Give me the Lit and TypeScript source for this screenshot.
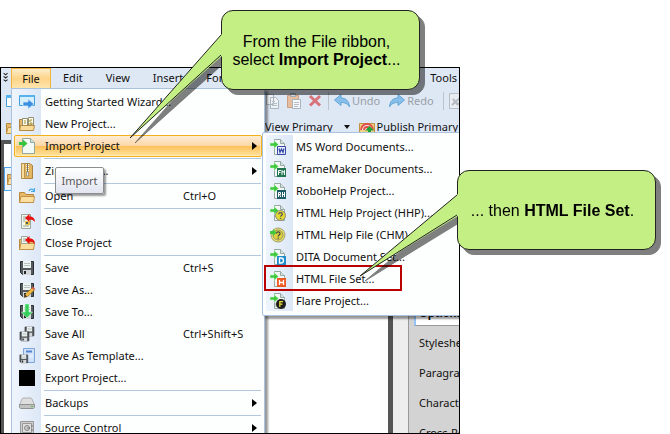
import { LitElement, html, svg, css, nothing, TemplateResult } from "lit";
import { customElement, property } from "lit/decorators.js";
import { classMap } from "lit/directives/class-map.js";

type Item = { label: string; icon: string; keys?: string; sub?: boolean; sep?: boolean; hot?: boolean };

const FILE_MENU: Item[] = [
  { label: "Getting Started Wizard...", icon: "wizard" },
  { label: "New Project...", icon: "newproject" },
  { label: "Import Project", icon: "import", sub: true, hot: true },
  { label: "Zip Project...", icon: "zip", sub: true, sep: true },
  { label: "Open", icon: "open", keys: "Ctrl+O", sep: true },
  { label: "Close", icon: "close", sep: true },
  { label: "Close Project", icon: "closeproject" },
  { label: "Save", icon: "save", keys: "Ctrl+S", sep: true },
  { label: "Save As...", icon: "saveas" },
  { label: "Save To...", icon: "saveto" },
  { label: "Save All", icon: "saveall", keys: "Ctrl+Shift+S" },
  { label: "Save As Template...", icon: "template" },
  { label: "Export Project...", icon: "export" },
  { label: "Backups", icon: "backup", sub: true, sep: true },
  { label: "Source Control", icon: "source", sub: true, sep: true },
];

const IMPORT_MENU: Item[] = [
  { label: "MS Word Documents...", icon: "word" },
  { label: "FrameMaker Documents...", icon: "frame" },
  { label: "RoboHelp Project...", icon: "robo" },
  { label: "HTML Help Project (HHP)...", icon: "hhp" },
  { label: "HTML Help File (CHM)...", icon: "chm" },
  { label: "DITA Document Set...", icon: "dita" },
  { label: "HTML File Set...", icon: "htmlset" },
  { label: "Flare Project...", icon: "flare" },
];

const folder = svg`
  <path d="M.5 14.5V4.5h5l1.500 2h7.500v8z" fill="#e5b967" stroke="#b8863b"/>
  <path d="M.5 14.500 2 8.500h13.500L14.500 14.500z" fill="#fbdf9f" stroke="#c2924a"/>`;
const redArrow = svg`<path d="M6 5 10.500 1v2.500C14 3.500 16 5.500 16 9c-1.500-2-3-2.500-5.500-2.300V9z" fill="#e8110f"/>`;
const disk = svg`
  <path d="M1.500 1.500h13v13h-11l-2-2z" fill="#555a5e" stroke="#2d3033"/>
  <path d="M4 1h8v7H4z" fill="#eef4f2"/><path d="M5 3.500h6M5 5.500h6" stroke="#b7c3c0"/>
  <path d="M4 10h8v5H4z" fill="#d3d7d9"/><path d="M5 11h2v3H5z" fill="#26292b"/>`;
const page = svg`
  <path d="M4.500.5h6l4 4v11h-10z" fill="#f3f8f7" stroke="#96a8a4"/>
  <path d="M10.500.5v4h4" fill="#d6e2df" stroke="#96a8a4"/>
  <path d="M0 4h4V1.500L8.500 5.500 4 9.500V7H0z" fill="#3fc93f" stroke="#d9f6d9" stroke-width=".5"/>`;
const badge = (color: string, glyph: TemplateResult<2>) => svg`
  ${page}<path d="M7 7h9v9H7z" fill=${color}/>
  <g fill="none" stroke="#fff">${glyph}</g>`;
const help = svg`
  <circle cx="10.500" cy="10.500" r="5" fill="#e3d932" stroke="#8a8a7a"/>
  <path d="M8.700 9.300c0-2.200 3.600-2.200 3.600 0 0 1.200-1.800 1.200-1.800 2.500M10.500 13v1" fill="none" stroke="#555" stroke-width="1.300"/>`;

const ICONS: Record<string, TemplateResult<2>> = {
  wizard: svg`<path d="M.5 1.500h15v10H.5z" fill="#d6effc" stroke="#3f9ee0"/><path d="M.5 1h15v2H.5z" fill="#57b3ee"/>
    <path d="M4 8h5V5l6 5-6 5v-3H4z" fill="#3b8fe0" stroke="#d7edff" stroke-width=".7"/>`,
  newproject: svg`<path d="M.500 13.500v-10h4l1 1.500h6v9z" fill="#e5b967" stroke="#ae8240"/>
    <path d="M3.500 2.500h5v8h-5zM9.500 1.500h5v9h-5z" fill="#fffdf0" stroke="#94906f"/>
    <path d="M5 5h2M5 7h2M11 4h2M11 7h2v2h-2zM11 4v2" stroke="#a28d31" fill="none"/>
    <path d="m.5 14.500 1-5h14l-1 5z" fill="#f9dc98" stroke="#b48942"/>`,
  import: svg`<path d="M3.500.5h8l4 4v11h-12z" fill="#f3faf6" stroke="#93a9a0"/><path d="M11.500.5v4h4" fill="#cfe4db" stroke="#93a9a0"/>
    <path d="M0 4h4V1.500L8.500 5.500 4 9.500V7H0z" fill="#35c43c"/>`,
  zip: svg`<path d="M2.500.5h8l3 2v13h-11z" fill="#e3b65f" stroke="#a9833f"/><path d="M2.500.5h3v15h-3z" fill="#f7dc9a" stroke="#b99250"/>
    <path d="M8.500 1v9" stroke="#f8f4dd" stroke-width="3" stroke-dasharray="1 1"/><path d="M8.500 1v8" stroke="#6e6d62"/><path d="M7.500 9h2v4h-2z" fill="#eeeeea" stroke="#7a7666" stroke-width=".6"/>`,
  open: svg`${folder}<path d="M10 3c1-2.500 4-2.500 5 0M15.500 0v3.500H12" fill="none" stroke="#4aaae8" stroke-width="1.200"/>`,
  close: svg`<path d="M2.500 1.500h9v14h-9z" fill="#f4f6f0" stroke="#9da69b"/><path d="M4 4h3M4 6h3M4 8h2M4 13h6" stroke="#8fa29a"/>
    <path d="M6 8h5v4H6z" fill="#e1c94b"/><path d="M7 9h2v2H7z" fill="#555"/>${redArrow}`,
  closeproject: svg`${folder}<path d="M2.500 1.500h6v7h-6z" fill="#f4f6f0" stroke="#9da69b"/><path d="M4 4h3M4 6h3" stroke="#8fa29a"/>${redArrow}`,
  save: disk,
  saveas: svg`${disk}<path d="m5 15.500 1-3 7.500-7 2.300 2.200-7.500 7z" fill="#f0b83c" stroke="#8c6420" stroke-width=".6"/><path d="m5 15.500 1-3 2.200 2z" fill="#333"/><path d="m12.500 6 1.500-1.300 2 2L14.700 8z" fill="#d95b4a"/>`,
  saveto: svg`${disk}<path d="M6 0h4v8h3.500L8 14 2.500 8H6z" fill="#35d05c" stroke="#c8f7d2" stroke-width=".6"/>`,
  saveall: svg`<g transform="translate(5 0) scale(.68)">${disk}</g><g transform="translate(0 5) scale(.68)">${disk}</g>`,
  template: svg`<path d="M4.500.5h11v14h-11z" fill="#cfe2fa" stroke="#7da5d8"/><path d="M7 3.500h6" stroke="#5484cf" stroke-width="2"/>
    <path d="M10 7h4M10 9h4" stroke="#f3f8ff"/><g transform="translate(0 6) scale(.6)">${disk}</g>`,
  export: svg`<path d="M0 0h16v16H0z" fill="#000"/>`,
  backup: svg`<path d="m3 4 1-1h8l1 1 2.500 6H.5z" fill="#dedede" stroke="#b0b0b0"/><path d="M.5 9.500h15v3l-1 1h-13l-1-1z" fill="#c2c2c2" stroke="#929292"/><path d="M12 11.500h2" stroke="#46c04a"/>`,
  source: svg`<path d="M1.500 1.500h13v13h-13z" fill="#cfcfcf" stroke="#999"/><path d="M3.500 3.500h9v9h-9z" fill="#dedede" stroke="#999"/><circle cx="8" cy="8" r="2.500" fill="#ccc" stroke="#888"/><path d="M8 8h3M13 5v2M13 9v2" stroke="#777"/>`,
  word: svg`${page}<path d="M7.500 7.500h8v8h-8z" fill="#e9eefb" stroke="#3448a8"/><path d="m9 9.500 1 4 1.500-3.500 1.500 3.500 1-4" fill="none" stroke="#3448a8" stroke-width="1.200"/>`,
  frame: badge("#20764f", svg`<path d="M8.500 14V9.500h2.500M8.500 11.500h2M12 14V9.500l1.200 2 1.300-2V14"/>`),
  robo: badge("#1d5b68", svg`<path d="M8.500 14V9.500h2v2h-2m1 0 1.300 2.500M12.500 9v5M14.500 9v5M12.500 11.500h2"/>`),
  hhp: svg`${page}${help}`,
  chm: svg`<circle cx="8" cy="8" r="7" fill="#ece564" stroke="#a0a07c"/><circle cx="8" cy="8" r="5" fill="#ddd23d" stroke="#98936c"/>
    <path d="M6.500 6.700c0-2.400 3.500-2.400 3.500 0C10 8 8.200 8 8.200 9.500M8.200 10.500v1.200" fill="none" stroke="#4a4a40" stroke-width="1.300"/>
    <path d="M0 4h3V2l3.500 3.500L3 9V7H0z" fill="#3fc93f"/>`,
  dita: badge("#1f8dcb", svg`<path d="M9.500 9v5h1.500c3.300 0 3.300-5 0-5z" stroke-width="1.300"/>`),
  htmlset: badge("#ee5a24", svg`<path d="M9.500 9v5M13.500 9v5M9.500 11.500h4" stroke-width="1.300"/>`),
  flare: svg`${page}<path d="M5 11h4M5 13h3" stroke="#96a8a4"/><circle cx="11" cy="11" r="5" fill="#1c1c1c"/><path d="M9.800 14V8.700h3.200M9.800 11.200h2.600" fill="none" stroke="#efe63a" stroke-width="1.200"/>`,
  copy: svg`<path d="M1.500 1.500h7v10h-7zM5.500 4.500h5l3 3v8h-8z" fill="#eff3f7" stroke="#a9b4bd"/><path d="M7 8.500h3M7 10.500h5M7 12.500h5" stroke="#b4bec6"/>`,
  paste: svg`<path d="M1.500 2.500h11v12h-11z" fill="#e6bd9e" stroke="#cd9f82"/><path d="M4.500.500h5v3h-5z" fill="#ccd2d8" stroke="#a3abb2"/><path d="M6.500 6.500h8v9h-8z" fill="#f5f7fa" stroke="#a9b4bd"/><path d="M8 9.500h5M8 11.500h5M8 13.500h4" stroke="#b4bec6"/>`,
  remove: svg`<path d="m3 3 10 9.500m0-9.500L3 12.500" stroke="#d9737a" stroke-width="3"/>`,
  undo: svg`<path d="M.5 7 7 1.500V5c5 0 8 3 8.500 9C13.500 10.500 11 9.500 7 9.500v3z" fill="#86bfe9" stroke="#64a5d8"/>`,
  redo: svg`<path d="M15.500 7 9 1.500V5C4 5 1 8 .5 14 2.500 10.500 5 9.500 9 9.500v3z" fill="#86bfe9" stroke="#64a5d8"/>`,
  picture: svg`<path d="M.5.500h15v15H.5z" fill="#e9edf2" stroke="#b7bec7"/><path d="M3 12 12 4M4 6l5 6M8 12l5-4" stroke="#b2b9c2" stroke-width="2"/>`,
  publish: svg`<path d="M.5 4.500h15v11H.5z" fill="#f3d184" stroke="#bf9140"/><path d="M2 11a6 6 0 1 1 12 0M5 11a3 3 0 1 1 6 0" fill="#fbe2dc" stroke="#e0504a" stroke-width="1.800"/>
    <path d="M10.500 7 15 11.500h-3V16H9v-4.500H6z" fill="#21a336"/>`,
  grid: svg`<path d="M.5 2.500h15v11H.5z" fill="#fff" stroke="#3f9ee0"/><path d="M0 2h16v3H0z" fill="#57b3ee"/><path d="M5.500 5v9M10.500 5v9" stroke="#9ac6e6"/>`,
  folder,
};

const icon = (name: string) =>
  html`<svg class="icon" viewBox="0 0 16 16" width="16" height="16" aria-hidden="true">${ICONS[name]}</svg>`;

@customElement("menu-list")
class MenuList extends LitElement {
  @property({ attribute: false }) items: Item[] = [];
  @property({ type: Boolean, reflect: true }) compact = false;

  static styles = css`
    :host {
      display: block;
      box-sizing: border-box;
      padding: 2px;
      border: 1px solid #a9c2dd;
      background: linear-gradient(90deg, #eff5fd, #dce7f6) 0 0 / 29px 100% no-repeat #fdfefe;
      box-shadow: 3px 3px 2px rgba(0, 0, 0, 0.4);
    }
    :host([compact]) {
      padding: 3px;
      border-radius: 2px;
      background: linear-gradient(90deg, #eff5fd, #dce7f6) 3px 2px / 27px 176px no-repeat #fdfefe;
    }
    .item {
      display: grid;
      grid-template-columns: 16px 1fr 67px 8px;
      align-items: center;
      width: 100%;
      height: 22px;
      padding: 0 3px 0 4px;
      border: 1px solid transparent;
      border-radius: 2px;
      background: none;
      color: #111;
      font: inherit;
      text-align: left;
      white-space: nowrap;
    }
    :host([compact]) .item { grid-template-columns: 16px 1fr; padding: 0 3px; }
    .label { padding-left: 10px; }
    .hot {
      border-color: #f3b01c;
      background: linear-gradient(#fdecd8, #fcd7a6 48%, #fdbf58 50%, #fee4a0);
      box-shadow: inset 0 0 0 1px rgba(255, 240, 200, 0.6);
    }
    .arrow { border: 4px solid transparent; border-left: 5px solid #000; border-right: 0; justify-self: center; }
    .sep { height: 1px; margin: 1px 1px 1px 30px; border: 0; background: #b4c8dd; }
    .icon { display: block; }
  `;

  render() {
    return this.items.map(
      (i) => html`
        ${i.sep ? html`<hr class="sep" />` : nothing}
        <button class=${classMap({ item: true, hot: !!i.hot })} role="menuitem">
          ${icon(i.icon)}<span class="label">${i.label}</span>
          ${this.compact ? nothing : html`<span>${i.keys ?? ""}</span>`}
          ${i.sub ? html`<span class="arrow"></span>` : nothing}
        </button>`
    );
  }
}

@customElement("app-root")
class AppRoot extends LitElement {
  static styles = css`
    :host {
      display: flex;
      flex-direction: column;
      position: relative;
      box-sizing: border-box;
      height: 100vh;
      padding: 67px 210px 0 0;
      overflow: hidden;
      background: #fff;
      color: #111;
      font: 11px/16px "Noto Sans", "Open Sans", sans-serif;
    }
    button { margin: 0; padding: 0; border: 0; background: none; color: inherit; font: inherit; white-space: nowrap; }
    .icon { display: block; flex: none; }
    .window {
      position: relative;
      display: flex;
      flex-direction: column;
      flex: 1;
      min-height: 0;
      overflow: hidden;
      border: 1px solid #000;
      background: #dee8f5;
    }
    .menubar { display: flex; flex: none; align-items: center; gap: 1px; height: 20px; }
    .grip { width: 9px; padding-left: 1px; box-sizing: border-box; }
    .menubar button { height: 20px; padding: 0 11px; }
    .menubar .file { min-width: 40px; border: 1px solid #f0b43c; border-bottom: 0; background: linear-gradient(#fdeccb, #fdd488 50%, #fee5ad); padding: 0 10px; }
    .menubar .tools { margin-left: auto; padding: 0 2px; }
    .bar { display: flex; flex: none; align-items: center; height: 26px; padding-left: 5px; white-space: nowrap; }
    .bar .group { display: flex; align-items: center; gap: 5px; margin-left: 243px; }
    .bar button { display: flex; align-items: center; gap: 2px; }
    .bar .dim { margin-right: 4px; color: #9a9fa5; }
    .rule { width: 1px; height: 18px; background: #bcc3cc; }
    .caret { border: 3px solid transparent; border-top: 4px solid #111; border-bottom: 0; margin: 0 4px 0 9px; }
    .body { display: flex; flex: 1; min-height: 0; }
    .edge { width: 3px; background: #555; }
    .doc { flex: 1; border-top: 4px solid #555; background: #fff; overflow: hidden; }
    .tab { margin-top: 23px; height: 20px; width: 30px; border: 1px solid #4ea3ea; background: #eaf4fd; padding: 2px 0 0 2px; }
    .split { width: 5px; background: #555; }
    .pad { width: 15px; background: #eee; }
    .side { width: 50px; border-left: 1px solid #999; background: #d3d3d3; overflow: hidden; white-space: nowrap; }
    .side .options { margin: 161px 0 2px 5px; padding: 4px 0 4px 3px; border-left: 2px solid #92c4f5; border-bottom: 1px solid #999; background: #fff; font-weight: bold; }
    .side .entry { height: 30px; padding-left: 10px; line-height: 30px; }
    .filemenu { position: absolute; top: 20px; left: 10px; width: 254px; }
    .submenu { position: absolute; top: 64px; left: 261px; width: 220px; }
    .tip {
      position: absolute;
      top: 99px;
      left: 54px;
      box-sizing: border-box;
      min-width: 49px;
      padding: 5px 5px 4px;
      border: 1px solid #8b8d91;
      border-radius: 2px;
      background: linear-gradient(#fff, #e2e5f0);
      box-shadow: 2px 2px 2px rgba(0, 0, 0, 0.4);
      color: #575757;
      text-align: center;
    }
    .mark { position: absolute; top: 265px; left: 264px; width: 138px; height: 26px; box-sizing: border-box; border: 2px solid #bb0000; }
    .callout {
      position: absolute;
      filter: drop-shadow(5px 5px 0 rgba(0, 0, 0, 0.5));
    }
    .bubble {
      display: flex;
      align-items: center;
      justify-content: center;
      box-sizing: border-box;
      width: 199px;
      height: 80px;
      padding: 1px 8px 0 0;
      border: 1px solid #222;
      border-radius: 12px;
      background: #c3ef84;
      color: #000;
      font: 16px/18px "Liberation Sans", Arial, sans-serif;
      text-align: center;
      white-space: nowrap;
    }
    .first { top: 10px; left: 221px; }
    .second { top: 170px; left: 457px; }
    .tail { position: absolute; right: 198px; top: 20px; display: block; }
  `;

  render() {
    return html`
      <main class="window">
        <nav class="menubar">
          <svg class="grip" viewBox="0 0 10 14" height="14" aria-hidden="true">
            <path d="m2 1 2.500 2L7 1M2 5l2.500 2L7 5M2 9l2.500 2L7 9" fill="none" stroke="#222" stroke-width="1.300" />
          </svg>
          <button class="file">File</button><button>Edit</button><button>View</button><button>Insert</button><button>Format</button>
          <button class="tools">Tools</button>
        </nav>
        <div class="bar">
          ${icon("grid")}
          <div class="group">
            <button aria-label="Copy">${icon("copy")}</button>
            <button aria-label="Paste">${icon("paste")}</button>
            <button aria-label="Delete">${icon("remove")}</button>
            <span class="rule"></span>
            <button class="dim">${icon("undo")}Undo</button>
            <button class="dim">${icon("redo")}Redo</button>
            <span class="rule"></span>
            <button aria-label="Insert picture">${icon("picture")}</button>
          </div>
        </div>
        <div class="bar">
          ${icon("folder")}
          <div class="group">
            <button>View Primary<span class="caret"></span></button>
            <button>${icon("publish")}Publish Primary</button>
          </div>
        </div>
        <div class="body">
          <div class="edge"></div>
          <div class="doc"><div class="tab">${icon("folder")}</div></div>
          <div class="split"></div>
          <div class="pad"></div>
          <div class="side">
            <div class="options">Options</div>
            ${["Stylesheet", "Paragraph", "Character", "Cross-Ref"].map((t) => html`<div class="entry">${t}</div>`)}
          </div>
        </div>
        <menu-list class="filemenu" role="menu" .items=${FILE_MENU}></menu-list>
        <menu-list class="submenu" role="menu" compact .items=${IMPORT_MENU}></menu-list>
        <div class="tip" role="tooltip">Import</div>
      </main>
      <div class="mark"></div>
      <div class="callout first">
        <div class="bubble"><div>From the File ribbon,<br />select <b>Import Project</b>...</div></div>
        <svg class="tail" width="92" height="110" viewBox="0 0 92 110" aria-hidden="true">
          <path d="M92 4 0 108 92 26z" fill="#c3ef84" />
          <path d="M91 5 0 108 91 25" fill="none" stroke="#222" />
        </svg>
      </div>
      <div class="callout second">
        <div class="bubble"><div>... then <b>HTML File Set</b>.</div></div>
        <svg class="tail" width="98" height="90" viewBox="0 0 98 90" aria-hidden="true">
          <path d="M98 4 0 86 98 26z" fill="#c3ef84" />
          <path d="M97 5 0 86 97 25" fill="none" stroke="#222" />
        </svg>
      </div>
    `;
  }
}
